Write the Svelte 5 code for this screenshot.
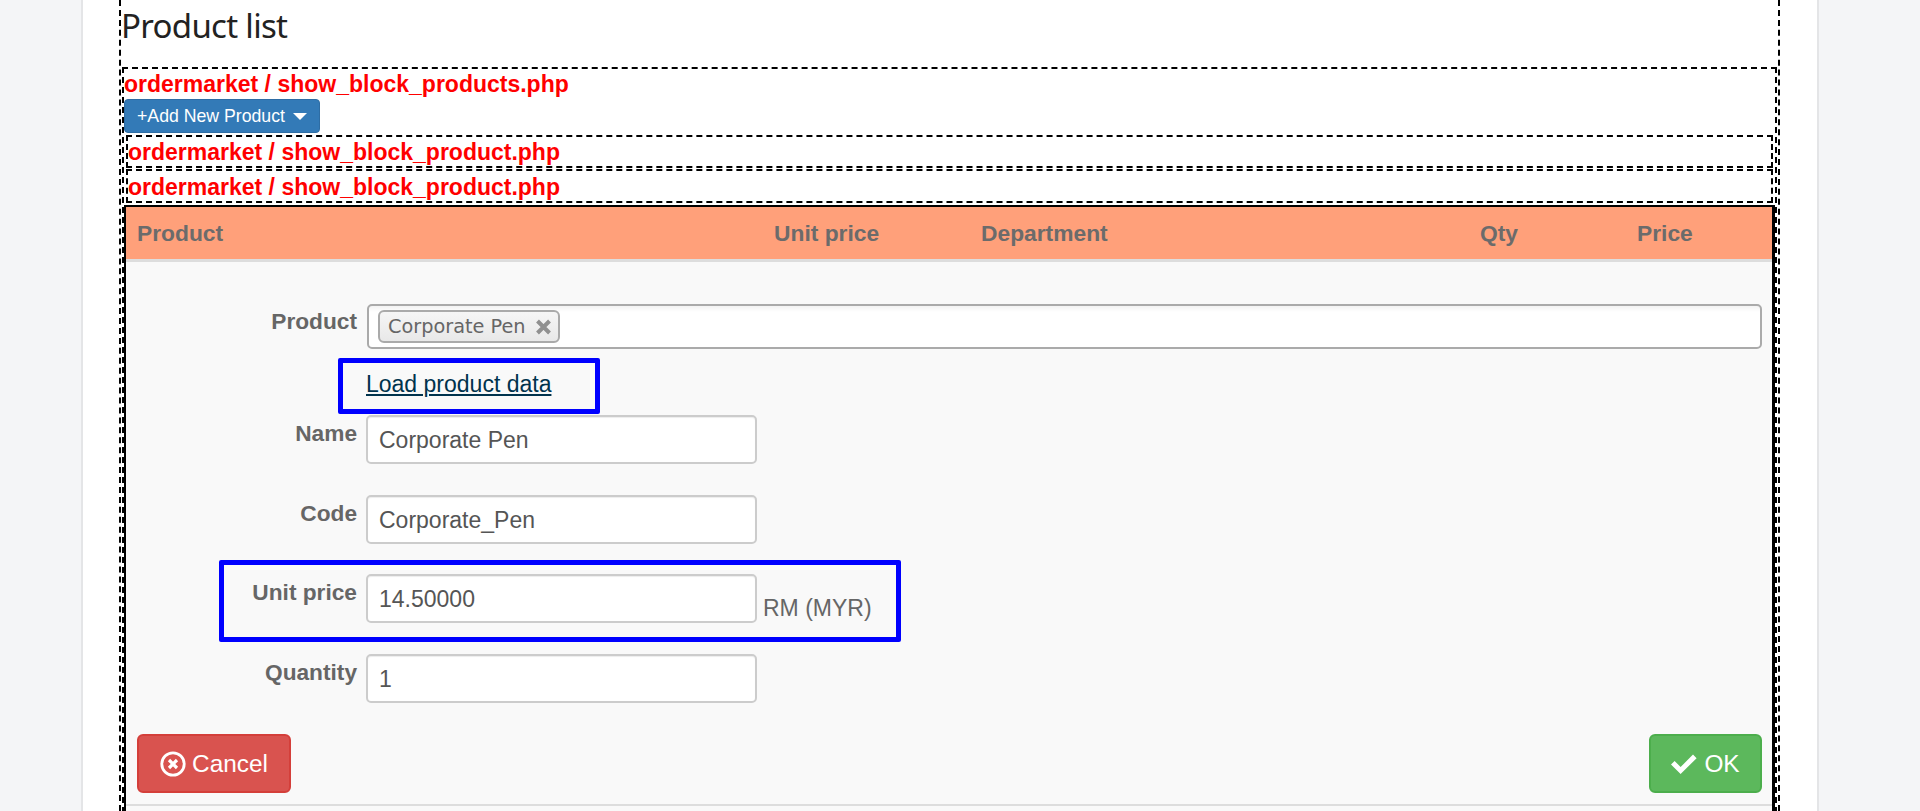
<script lang="ts">
	const headers = [
		{ text: 'Product' },
		{ text: 'Unit price' },
		{ text: 'Department' },
		{ text: 'Qty' },
		{ text: 'Price' }
	];
</script>

<div class="page">
	<main class="panel">
		<div class="outer">
			<h2>Product list</h2>
			<section class="block">
				<div class="php">ordermarket / show_block_products.php</div>
				<button class="add" type="button">+Add New Product <span class="caret"></span></button>

				<div class="block item first">
					<div class="php">ordermarket / show_block_product.php</div>
				</div>
				<div class="block item second">
					<div class="php">ordermarket / show_block_product.php</div>
				</div>

				<div class="editor">
					<div class="head">
						{#each headers as h}
							<strong>{h.text}</strong>
						{/each}
					</div>

					<div class="body">
						<div class="row select-row">
							<label for="product">Product</label>
							<div class="select" id="product">
								<span class="tag">
									Corporate Pen
									<svg width="17" height="16" viewBox="0 0 17 16" aria-hidden="true">
										<path d="M2.5 2 14.5 14M14.5 2 2.5 14" stroke="#909090" stroke-width="4" fill="none" />
									</svg>
								</span>
							</div>
						</div>

						<div class="load"><a href="#load">Load product data</a></div>

						<div class="row">
							<label for="name">Name</label>
							<input id="name" value="Corporate Pen" />
						</div>
						<div class="row">
							<label for="code">Code</label>
							<input id="code" value="Corporate_Pen" />
						</div>
						<div class="row unit">
							<label for="unit">Unit price</label>
							<input id="unit" value="14.50000" />
							<span class="currency">RM (MYR)</span>
						</div>
						<div class="row">
							<label for="qty">Quantity</label>
							<input id="qty" value="1" />
						</div>

						<div class="actions">
							<button class="btn cancel" type="button">
								<svg width="26" height="26" viewBox="0 0 26 26" aria-hidden="true">
									<circle cx="13" cy="13" r="11.2" stroke="#fff" stroke-width="2.8" fill="none" />
									<path d="M9 9 17 17M17 9 9 17" stroke="#fff" stroke-width="3.2" fill="none" />
								</svg>
								Cancel
							</button>
							<button class="btn ok" type="button">
								<svg width="26" height="20" viewBox="0 0 26 20" aria-hidden="true">
									<path d="M0 10.5 3.6 7 9.6 13 22 0.6 25.6 4.2 9.6 20Z" fill="#fff" />
								</svg>
								OK
							</button>
						</div>

						<div class="note load-note"></div>
						<div class="note unit-note"></div>
					</div>
				</div>
			</section>
		</div>
	</main>
</div>

<style>
	:global(html),
	:global(body) {
		margin: 0;
		height: 811px;
		overflow: hidden;
	}

	.page {
		height: 811px;
		overflow: hidden;
		padding: 0 101px 0 81px;
		background: #f4f5f7;
		font-family: 'Liberation Sans', Arial, sans-serif;
		color: #666;
	}

	.panel {
		height: 811px;
		padding: 0 37px 0 36px;
		background: #fff;
		border-left: 2px solid #e4e5e7;
		border-right: 2px solid #e4e5e7;
	}

	.outer {
		height: 100%;
		border: 2px dashed #000;
		border-top: 0;
		border-bottom: 0;
		padding: 0 1px;
	}

	h2 {
		height: 67px;
		margin: 0 0 0 -1px;
		color: #222;
		font-family: 'Noto Sans', sans-serif;
		font-size: 33px;
		font-weight: 400;
		letter-spacing: -0.7px;
		line-height: 52px;
	}

	.block {
		border: 2px dashed #000;
		border-bottom: 0;
	}

	.php {
		color: #f00;
		font-size: 23px;
		font-weight: 700;
		line-height: 30px;
	}

	.add {
		display: block;
		width: 196px;
		height: 34px;
		padding: 0 0 0 12px;
		background: #337ab7;
		border: 1px solid #2e6da4;
		border-radius: 4px;
		color: #fff;
		font-family: inherit;
		font-size: 17.7px;
		text-align: left;
	}

	.caret {
		display: inline-block;
		margin-left: 3px;
		vertical-align: 2px;
		border-top: 7px solid #fff;
		border-left: 7px solid transparent;
		border-right: 7px solid transparent;
	}

	.item {
		margin: 2px 2px 0;
		border-bottom: 2px dashed #000;
	}

	.item .php {
		height: 29px;
		line-height: 31px;
	}

	.second {
		margin-top: 1px;
	}

	.second .php {
		height: 30px;
		line-height: 32px;
	}

	.editor {
		margin-top: 2px;
		height: 606px;
		border: 2px solid #000;
		border-bottom: 0;
		border-right-width: 3px;
		background: #f9f9f9;
	}

	.head {
		display: grid;
		grid-template-columns: 637px 207px 499px 157px 1fr;
		align-items: center;
		height: 52px;
		padding-left: 11px;
		background: #ffa07a;
		border-bottom: 3px solid #ddd;
		font-size: 22.8px;
	}

	.head strong {
		color: #6b6b6b;
	}

	.body {
		position: relative;
		padding-top: 42px;
		height: 500px;
		border-bottom: 2px solid #ddd;
	}

	.row {
		display: grid;
		grid-template-columns: 231px 390px auto;
		column-gap: 10px;
		justify-content: start;
		height: 48px;
		margin-bottom: 32px;
	}

	.unit {
		margin-top: -1px;
	}

	.select-row {
		grid-template-columns: 231px 1fr;
		height: 45px;
		margin: 0 10px 0 0;
	}

	label {
		padding-top: 4px;
		color: #666;
		font-size: 22.7px;
		font-weight: 700;
		line-height: 26px;
		text-align: right;
	}

	.select {
		display: flex;
		align-items: center;
		padding-left: 9px;
		background: linear-gradient(#f3f3f3, #fff 6px);
		border: 2px solid #aaa;
		border-radius: 5px;
	}

	.tag {
		display: flex;
		align-items: center;
		justify-content: space-between;
		box-sizing: border-box;
		width: 182px;
		height: 33px;
		padding: 0 6px 0 8px;
		background: linear-gradient(#f6f6f6, #e8e8e8);
		border: 2px solid #aaa;
		border-radius: 6px;
		color: #666;
		font-family: 'DejaVu Sans', sans-serif;
		font-size: 19.3px;
	}

	.load {
		height: 67px;
		padding-left: 240px;
		font-size: 23px;
		line-height: 70px;
	}

	.load a {
		color: #00334d;
	}

	input {
		box-sizing: border-box;
		height: 49px;
		margin: -1px 0 0 -1px;
		padding: 2px 11px 0;
		background: #fff;
		border: 2px solid #ccc;
		border-radius: 5px;
		box-shadow: inset 0 1px 1px rgba(0, 0, 0, 0.075);
		color: #555;
		font-family: inherit;
		font-size: 23px;
	}

	.currency {
		margin-left: -4px;
		padding-top: 20px;
		color: #666;
		font-size: 23px;
		line-height: 26px;
	}

	.actions {
		display: flex;
		justify-content: space-between;
		margin: -1px 10px 0 11px;
	}

	.btn {
		display: flex;
		align-items: center;
		justify-content: center;
		height: 59px;
		border-radius: 6px;
		color: #fff;
		font-family: inherit;
		font-size: 24.4px;
	}

	.cancel {
		gap: 6px;
		width: 154px;
		background: #d9534f;
		border: 2px solid #d43f3a;
	}

	.ok {
		gap: 7px;
		width: 113px;
		background: #5cb85c;
		border: 2px solid #4cae4c;
	}

	.note {
		position: absolute;
		box-sizing: border-box;
		border: 5px solid #00f;
		border-radius: 2px;
		pointer-events: none;
	}

	.load-note {
		top: 96px;
		left: 212px;
		width: 262px;
		height: 56px;
	}

	.unit-note {
		top: 298px;
		left: 93px;
		width: 682px;
		height: 82px;
	}
</style>
